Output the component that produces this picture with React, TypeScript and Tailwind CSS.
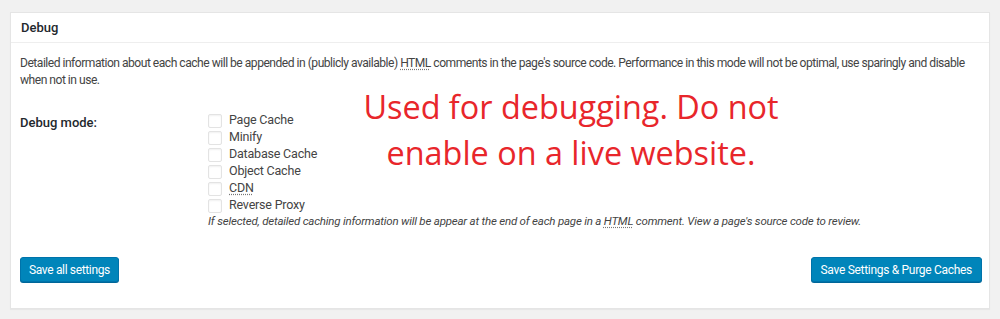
const modes = ["Page Cache", "Minify", "Database Cache", "Object Cache", "CDN", "Reverse Proxy"];

function Abbr({ children }: { children: string }) {
  return <span className="underline decoration-dotted decoration-[#777] underline-offset-2">{children}</span>;
}

export default function App() {
  return (
    <div className="w-[1000px] h-[319px] bg-[#f1f1f1] pt-[12px] px-[10px] font-['Roboto',sans-serif] text-[#444]">
      <div className="relative bg-white border border-[#e5e5e5] shadow-[0_1px_1px_rgba(0,0,0,0.04)] h-[297px]">
        <div className="h-[30px] border-b border-[#eee] px-[10px] flex items-center">
          <h3 className="text-[13px] font-medium text-[#23282d]">Debug</h3>
        </div>
        <div className="pl-[9px] pr-[7px] pt-[12px]">
          <p className="text-[12.1px] leading-[17px] tracking-[-0.5px]">
            Detailed information about each cache will be appended in (publicly available) <Abbr>HTML</Abbr> comments in the page's source code. Performance in this mode will not be optimal, use sparingly and disable when not in use.
          </p>
          <div className="flex mt-[23px]">
            <div className="w-[188px] text-[13px] font-medium text-[#23282d] pt-[1px]">Debug mode:</div>
            <div className="flex flex-col">
              {modes.map((m) => (
                <label key={m} className="flex items-center h-[17px] text-[12.5px] tracking-[-0.2px]">
                  <span className="w-[14px] h-[14px] border border-[#e3e3e3] rounded-[2px] shadow-[inset_0_1px_2px_rgba(0,0,0,0.06)] mr-[7px]" />
                  {m === "CDN" ? <Abbr>CDN</Abbr> : m}
                </label>
              ))}
              <p className="text-[11.5px] italic leading-[16px] -mt-[1px] tracking-[-0.2px]">
                If selected, detailed caching information will be appear at the end of each page in a <Abbr>HTML</Abbr> comment. View a page's source code to review.
              </p>
            </div>
          </div>
          <div className="flex justify-between mt-[28px]">
            <button className="h-[25px] px-[8px] bg-[#0085ba] border border-[#0073aa] rounded-[3px] text-white text-[12px] tracking-[-0.35px] shadow-[0_1px_0_#006799]">
              Save all settings
            </button>
            <button className="h-[25px] px-[9px] bg-[#0085ba] border border-[#0073aa] rounded-[3px] text-white text-[12px] tracking-[-0.3px] shadow-[0_1px_0_#006799]">
              Save Settings &amp; Purge Caches
            </button>
          </div>
        </div>
        <div className="absolute left-[320px] top-[70px] w-[480px] text-center text-[#e8262b] text-[32.4px] leading-[46px] font-['Open_Sans',sans-serif]">
          Used for debugging. Do not
          <br />
          enable on a live website.
        </div>
      </div>
    </div>
  );
}
